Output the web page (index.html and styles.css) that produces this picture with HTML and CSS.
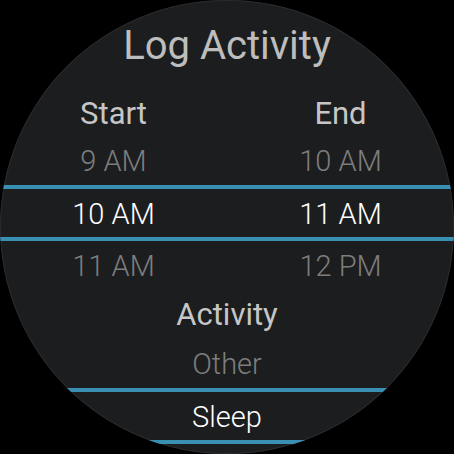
FILE: index.html
```html
<!DOCTYPE html>
<html lang="en">
<head>
    <meta charset="UTF-8">
    <meta name="viewport" content="width=device-width, initial-scale=1.0">
    <title>Log Activity</title>
    <link rel="stylesheet" href="styles.css">
</head>
<body>
    <div class="watch">
        <h1 class="title">Log Activity</h1>

        <!-- Start / End time pickers -->
        <div class="row header">
            <span>Start</span>
            <span>End</span>
        </div>
        <div class="row option top">
            <span>9 AM</span>
            <span>10 AM</span>
        </div>
        <div class="row option selected">
            <span>10 AM</span>
            <span>11 AM</span>
        </div>
        <div class="row option bottom">
            <span>11 AM</span>
            <span>12 PM</span>
        </div>

        <!-- Activity picker -->
        <div class="single header activity-label">Activity</div>
        <div class="single option other">Other</div>
        <div class="single option selected">Sleep</div>
    </div>
</body>
</html>
```

FILE: styles.css
```css
body {
    margin: 0;
    background: #000;
    font-family: Roboto, "Liberation Sans", sans-serif;
}

.watch {
    width: 454px;
    height: 454px;
    border-radius: 50%;
    overflow: hidden;
    background: #1c1d1f;
    box-shadow: inset 0 0 0 1px #2a2b2d;
    display: flex;
    flex-direction: column;
}

.title {
    margin: 0;
    padding-top: 1px;
    height: 89px;
    line-height: 89px;
    font-size: 40px;
    font-weight: 400;
    color: #bdbdbd;
    text-align: center;
}

.row {
    display: grid;
    grid-template-columns: 1fr 1fr;
    text-align: center;
}

.single {
    text-align: center;
}

/* every block sits 1-2px lower than its box centre */
.header,
.option {
    padding-top: 2px;
}

.header {
    height: 44px;
    line-height: 44px;
    font-size: 31px;
    font-weight: 400;
    color: #c6c6c6;
}

.option {
    font-size: 29px;
    font-weight: 300;
    color: #7d7d7d;
}

.top, .bottom {
    height: 47px;
    line-height: 47px;
}

.selected {
    height: 46px;
    line-height: 46px;
    color: #fff;
    border-top: 4px solid #3a90b2;
    border-bottom: 4px solid #3a90b2;
}

.activity-label {
    height: 46px;
    line-height: 46px;
}

.other {
    height: 48px;
    line-height: 48px;
}
```
